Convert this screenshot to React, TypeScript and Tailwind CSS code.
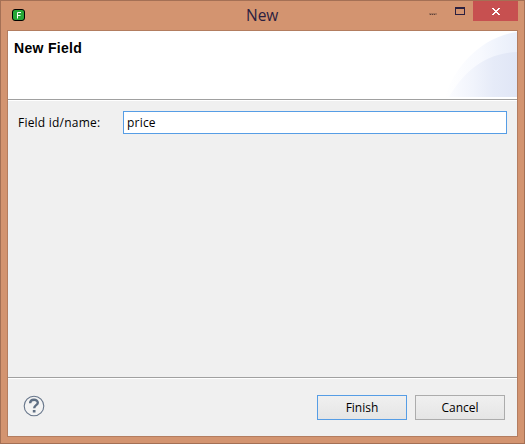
import React from "react";

function TitleBar() {
  return (
    <header className="relative flex h-[29px] shrink-0 justify-between">
      <svg className="ml-[11px] mt-2" width="13" height="12" viewBox="0 0 13 12">
        <rect x="0.5" y="0.5" width="12" height="11" rx="2.5" fill="#27a737" stroke="#000" />
        <path d="M5.5 9.5V3.5H9M5.5 6.5H8.5" fill="none" stroke="#fff" />
      </svg>
      <h1 className="absolute left-[245px] top-[4px] font-['Open_Sans','Noto_Sans',sans-serif] text-[15.5px] leading-[20px] text-[#2b2040]">
        New
      </h1>
      <div className="mr-[6px] flex items-start">
        <svg width="44" height="20" viewBox="429 1 44 20" shapeRendering="crispEdges">
          <rect x="429" y="13" width="8" height="2" fill="#a9785d" />
          <path d="M430 14h1v1h-1zM432 14h1v1h-1zM434 14h1v1h-1z" fill="#604038" />
          <path fillRule="evenodd" d="M455 7h10v8h-10zM456 9v5h8V9z" fill="#2b2040" />
        </svg>
        <button className="flex h-5 w-[45px] items-center justify-center bg-[#c75050]" aria-label="Close">
          <svg className="mt-px" width="8" height="7" viewBox="0 0 8 7" shapeRendering="crispEdges" fill="#fff">
            <path d="M0 0h2v1H0zM6 0h2v1H6zM1 1h2v1H1zM5 1h2v1H5zM2 2h4v1H2zM3 3h2v1H3zM2 4h4v1H2zM1 5h2v1H1zM5 5h2v1H5zM0 6h2v1H0zM6 6h2v1H6z" />
          </svg>
        </button>
      </div>
    </header>
  );
}

function Banner() {
  return (
    <div className="flex h-[68px] shrink-0 justify-between bg-white">
      <h2 className="ml-[6px] mt-[9px] font-['Liberation_Sans',Arial,sans-serif] text-[14px] font-bold leading-[17px] tracking-[0.3px] text-black">
        New Field
      </h2>
      <svg width="72" height="66" viewBox="445 31 72 66">
        <defs>
          <linearGradient id="outerSwoosh">
            <stop offset="0" stopColor="#ffffff" />
            <stop offset="0.5" stopColor="#f7f9fe" />
            <stop offset="0.75" stopColor="#eff3fc" />
            <stop offset="1" stopColor="#e9eefa" />
          </linearGradient>
          <linearGradient id="innerSwoosh">
            <stop offset="0" stopColor="#fbfcff" />
            <stop offset="0.35" stopColor="#f1f4fc" />
            <stop offset="0.65" stopColor="#e6ebf8" />
            <stop offset="1" stopColor="#e0e6f6" />
          </linearGradient>
        </defs>
        <path d="M445 97C453 69 480 37 517 32V97Z" fill="url(#outerSwoosh)" />
        <path d="M449 97C461 76 482 53 517 52V97Z" fill="url(#innerSwoosh)" />
      </svg>
    </div>
  );
}

function HelpIcon() {
  return (
    <svg width="22" height="22" viewBox="0 0 22 22" aria-label="Help">
      <circle cx="11" cy="11" r="9.8" fill="#f3f3f3" stroke="#66758a" strokeWidth="1.1" />
      <path d="M7.1 8.2C7.2 3.8 14.8 3.7 14.8 7.7C14.8 10.3 11.2 10 11.2 13.2" fill="none" stroke="#5f6f83" strokeWidth="2.4" />
      <rect x="9.8" y="15" width="2.7" height="2.5" fill="#5f6f83" />
    </svg>
  );
}

export default function App() {
  return (
    <div className="flex h-[444px] w-[525px] flex-col border border-[#a47055] bg-[#d39470] font-['Open_Sans','Noto_Sans',sans-serif] text-[12px] text-black">
      <TitleBar />
      <main className="mx-[6px] mb-[6px] flex flex-1 flex-col border border-[#b37d60] bg-[#f0f0f0]">
        <Banner />
        <div className="h-0.5 shrink-0 border-t border-[#a0a0a0] bg-white" />
        <section className="flex flex-1 items-start pl-[10px] pr-[10px] pt-[10px]">
          <label htmlFor="field" className="w-[105px] whitespace-nowrap leading-[23px] tracking-[0.22px]">
            Field id/name:
          </label>
          <input
            id="field"
            defaultValue="price"
            className="h-[23px] min-w-0 flex-1 border border-[#569de5] bg-white px-[3px] leading-[21px] tracking-[0.2px] outline-none"
          />
        </section>
        <div className="h-0.5 shrink-0 border-t border-[#a0a0a0] bg-white" />
        <footer className="flex h-[57px] shrink-0 items-start justify-between pl-[15px] pr-3 pt-4">
          <HelpIcon />
          <div className="flex gap-2">
            <button className="h-[25px] w-[90px] border border-[#569de5] bg-linear-to-b from-[#f0f0f0] to-[#e5e5e5]">Finish</button>
            <button className="h-[25px] w-[90px] border border-[#acacac] bg-linear-to-b from-[#f0f0f0] to-[#e5e5e5]">Cancel</button>
          </div>
        </footer>
      </main>
    </div>
  );
}
